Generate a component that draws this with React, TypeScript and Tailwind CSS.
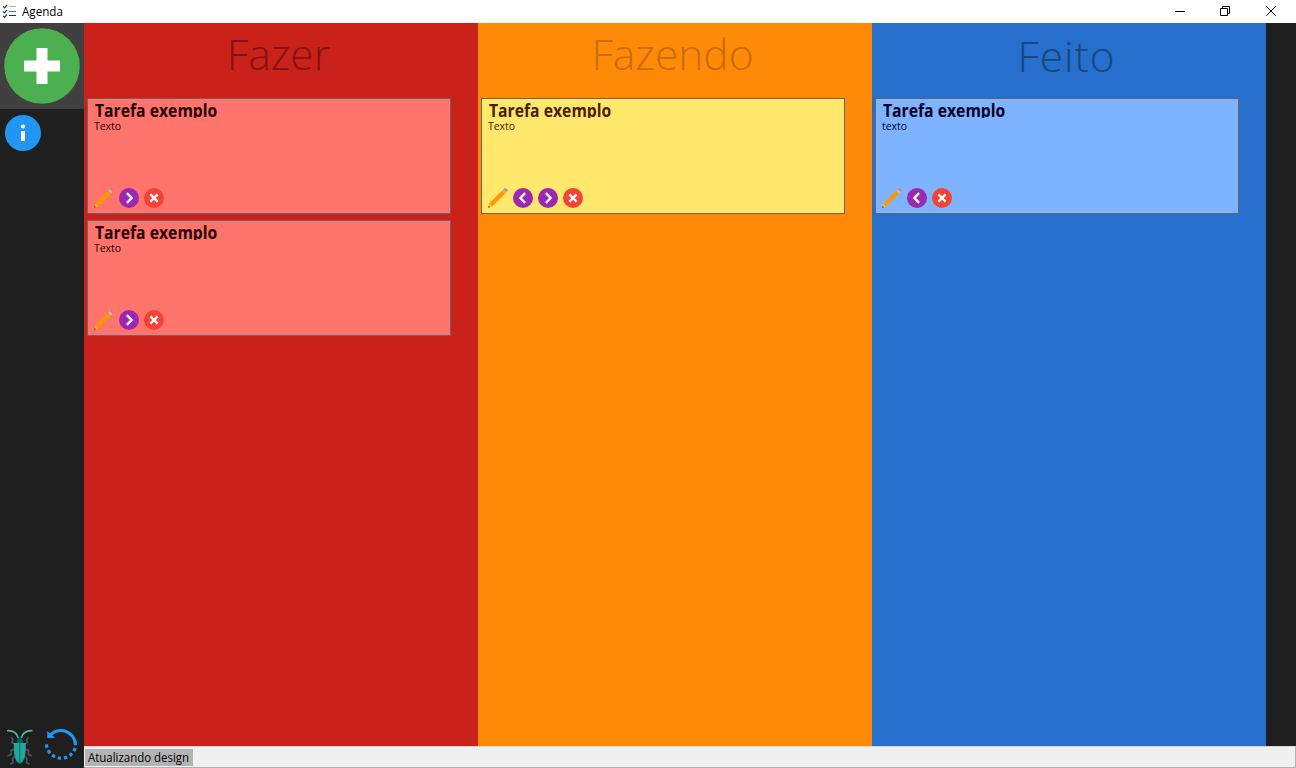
import React from 'react';

type Action = 'edit' | 'back' | 'forward' | 'remove';

function PencilIcon() {
  return (
    <svg width="20" height="20" viewBox="0 0 20 20">
      <path d="M14.4 2.4 16.7.3Q17.6-.2 18.6.8L19.4 1.6Q20 2.4 19.4 3.2L17.4 5.4Z" fill="#e57373" />
      <path d="M14 2.8 15.9 1l3 3L17 5.8Z" fill="#b0bec5" />
      <path d="M1.2 15.6 14 2.8 17 5.8 4.2 18.6Z" fill="#ff9800" />
      <path d="M1.2 15.6 4.2 18.6.2 19.6Z" fill="#ffc107" />
      <path d="M.6 17.8 2.1 19.2.1 19.8Z" fill="#37474f" />
    </svg>
  );
}

function ArrowIcon({ back = false }: { back?: boolean }) {
  return (
    <svg width="20" height="20" viewBox="0 0 20 20">
      <circle cx="10" cy="10" r="10" fill="#9c27b0" />
      <path d={back ? 'M12.1 5.1 7.4 10l4.7 4.9' : 'M7.9 5.1 12.6 10l-4.7 4.9'} fill="none" stroke="#fff" strokeWidth="2.3" />
    </svg>
  );
}

function RemoveIcon() {
  return (
    <svg width="20" height="20" viewBox="0 0 20 20">
      <circle cx="10" cy="10" r="10" fill="#f44336" />
      <path d="m6.400 6.400 7.200 7.200m0-7.200-7.200 7.200" stroke="#fff" strokeWidth="2.3" />
    </svg>
  );
}

function BeetleIcon() {
  return (
    <svg width="28" height="36" viewBox="0 0 28 36">
      <g fill="none" stroke="#455a64" strokeWidth="1.6">
        <path d="M9 15 6 13.500 7 10.500 5 8.500M18.500 15l3-1.500-1-3 2-2" />
        <path d="m8 20-3 1.500v4L1.500 27M19.500 20l3 1.500v4l3.500 1.500" />
        <path d="m9 27-2.500 2.500.500 4-3 1.700M18.500 27l2.500 2.500-.500 4 3 1.700" />
      </g>
      <path d="M1 1.700Q10 1 12.300 9M26.500 1.700Q17.500 1 15.200 9" fill="none" stroke="#4db6ac" strokeWidth="1.600" />
      <path d="M11 14Q10.500 9 13.800 9t3 5Z" fill="#00695c" />
      <path d="M8 14h11.600Q20.300 24 18.300 29.500 16.300 34 13.800 34.500q-2.500-.5-4.500-5Q7.300 24 8 14Z" fill="#26a69a" />
      <path d="M13 14h1.500V34.500h-1.500Z" fill="#00897b" />
    </svg>
  );
}

function RestoreIcon() {
  return (
    <svg width="34" height="34" viewBox="0 0 34 34">
      <path d="M6.500 6.800A14.700 14.700 0 0 1 31.500 17.300" fill="none" stroke="#2196f3" strokeWidth="3.200" />
      <path d="M3.200 3v7h8Z" fill="#2196f3" />
      <path d="M31.200 20A14.700 14.700 0 0 1 2.500 15" fill="none" stroke="#2196f3" strokeWidth="3.200" strokeDasharray="3.400 2.800" />
    </svg>
  );
}

function TitleBar() {
  return (
    <header className="flex h-[23px] shrink-0 items-center bg-white">
      <svg width="17" height="16" viewBox="0 0 17 16" className="ml-[2px]">
        <path d="m1 2.300 1.500 1.500L5 1M1 7.300 2.500 8.800 5 6M1 11.800 2.500 13.300 5 10.500" fill="none" stroke="#243850" strokeWidth="1.200" />
        <path d="M7 2.500h7" stroke="#8bbcd5" />
        <path d="M7 7.500h7" stroke="#3c7ca8" />
        <path d="M7 11.500h7" stroke="#243850" />
      </svg>
      <span className="ml-[3px] origin-left scale-x-[0.97] text-[12px] leading-[23px] text-black">Agenda</span>
      <div className="ml-auto flex h-[21px] items-center">
        <svg width="121" height="21" viewBox="0 0 121 21" fill="none" stroke="#000" className="shrink-0">
          <path d="M0 10.500h10M45.500 7.500h7v7h-7zM47.500 7V5.500h7v7H53" />
          <path d="m91.300 5.300 9.400 9.400m0-9.400-9.400 9.400" />
        </svg>
      </div>
    </header>
  );
}

function Sidebar() {
  return (
    <aside className="flex w-[84px] shrink-0 flex-col bg-[#1f1f1f]">
      <button className="flex h-[86px] w-[84px] items-center justify-center bg-[#404040]">
        <svg width="76" height="76" viewBox="0 0 76 76">
          <circle cx="38" cy="38" r="37.800" fill="#4caf50" />
          <path d="M32.500 20h11v12.500H56v11H43.500V56h-11V43.500H20v-11h12.500Z" fill="#fff" />
        </svg>
      </button>
      <button className="mt-[6px] ml-[5px] size-9">
        <svg width="36" height="36" viewBox="0 0 36 36">
          <circle cx="18" cy="18" r="18" fill="#2196f3" />
          <circle cx="18" cy="11.500" r="2.100" fill="#fff" />
          <path d="M16 16h4v10h-4z" fill="#fff" />
        </svg>
      </button>
      <div className="mt-auto flex items-start pb-[3px] pl-[6px]">
        <BeetleIcon />
        <div className="-mt-px ml-[10px]"><RestoreIcon /></div>
      </div>
    </aside>
  );
}

interface CardProps {
  body: string;
  tone: string;
  titleTone: string;
  actions: Action[];
}

function Card({ body, tone, titleTone, actions }: CardProps) {
  return (
    <article className={`flex h-[116px] w-[364px] flex-col border border-[#666] pl-[6px] ${tone}`}>
      <h2 className={`h-[19px] overflow-hidden pl-px text-[17px] leading-[23px] font-bold ${titleTone}`}>
        <span className="inline-block origin-left scale-x-[0.925] whitespace-nowrap">Tarefa exemplo</span>
      </h2>
      <p className="text-[11px] leading-[15px]">
        <span className="inline-block origin-left scale-x-[0.95]">{body}</span>
      </p>
      <div className="mt-auto flex gap-[5px] pb-[5px]">
        {actions.map((action) => (
          <button key={action} className="size-5" aria-label={action}>
            {action === 'edit' && <PencilIcon />}
            {action === 'back' && <ArrowIcon back />}
            {action === 'forward' && <ArrowIcon />}
            {action === 'remove' && <RemoveIcon />}
          </button>
        ))}
      </div>
    </article>
  );
}

interface ColumnProps {
  title: string;
  tone: string;
  titleTone: string;
  children: React.ReactNode;
}

function Column({ title, tone, titleTone, children }: ColumnProps) {
  return (
    <section className={`flex w-[394px] shrink-0 flex-col ${tone}`}>
      <h1 className={`h-[75px] pr-[5px] text-center text-[42.5px] leading-[61px] font-light ${titleTone}`}>{title}</h1>
      <div className="flex flex-col gap-[6px] pl-[3px]">{children}</div>
    </section>
  );
}

export default function App() {
  return (
    <div className="flex h-[768px] w-[1296px] flex-col overflow-hidden bg-[#1f1f1f] font-['Open_Sans','Noto_Sans',sans-serif]">
      <TitleBar />
      <div className="flex min-h-0 flex-1">
        <Sidebar />
        <div className="flex min-w-0 flex-1 flex-col">
          <main className="flex min-h-0 flex-1">
            <Column title="Fazer" tone="bg-[#cb211b]" titleTone="text-[#821410]">
              <Card body="Texto" tone="bg-[#ff746c] text-[#260000]" titleTone="text-[#260000]" actions={['edit', 'forward', 'remove']} />
              <Card body="Texto" tone="bg-[#ff746c] text-[#260000]" titleTone="text-[#260000]" actions={['edit', 'forward', 'remove']} />
            </Column>
            <Column title="Fazendo" tone="bg-[#ff8a08]" titleTone="text-[#c96c05]">
              <Card body="Texto" tone="bg-[#ffe86b] text-[#4b2000]" titleTone="text-[#4b2000]" actions={['edit', 'back', 'forward', 'remove']} />
            </Column>
            <Column title="Feito" tone="bg-[#266fcd]" titleTone="pt-[2px] tracking-[0.9px] text-[#18467f]">
              <Card body="texto" tone="bg-[#7eb3ff] text-[#000026]" titleTone="text-[#000026]" actions={['edit', 'back', 'remove']} />
            </Column>
          </main>
          <footer className="flex h-[22px] shrink-0 border-t border-r border-b border-t-[#d7d7d7] border-r-[#b0b0b0] border-b-[#b0b0b0] bg-[#f0f0f0] pt-[2px] pl-[1px]">
            <div className="h-[17px] w-[108px] bg-[#b3b3b3] pl-[3px] text-[12px] leading-[17px] whitespace-nowrap text-black">
              <span className="inline-block origin-left scale-x-[0.953]">Atualizando design</span>
            </div>
          </footer>
        </div>
      </div>
    </div>
  );
}
